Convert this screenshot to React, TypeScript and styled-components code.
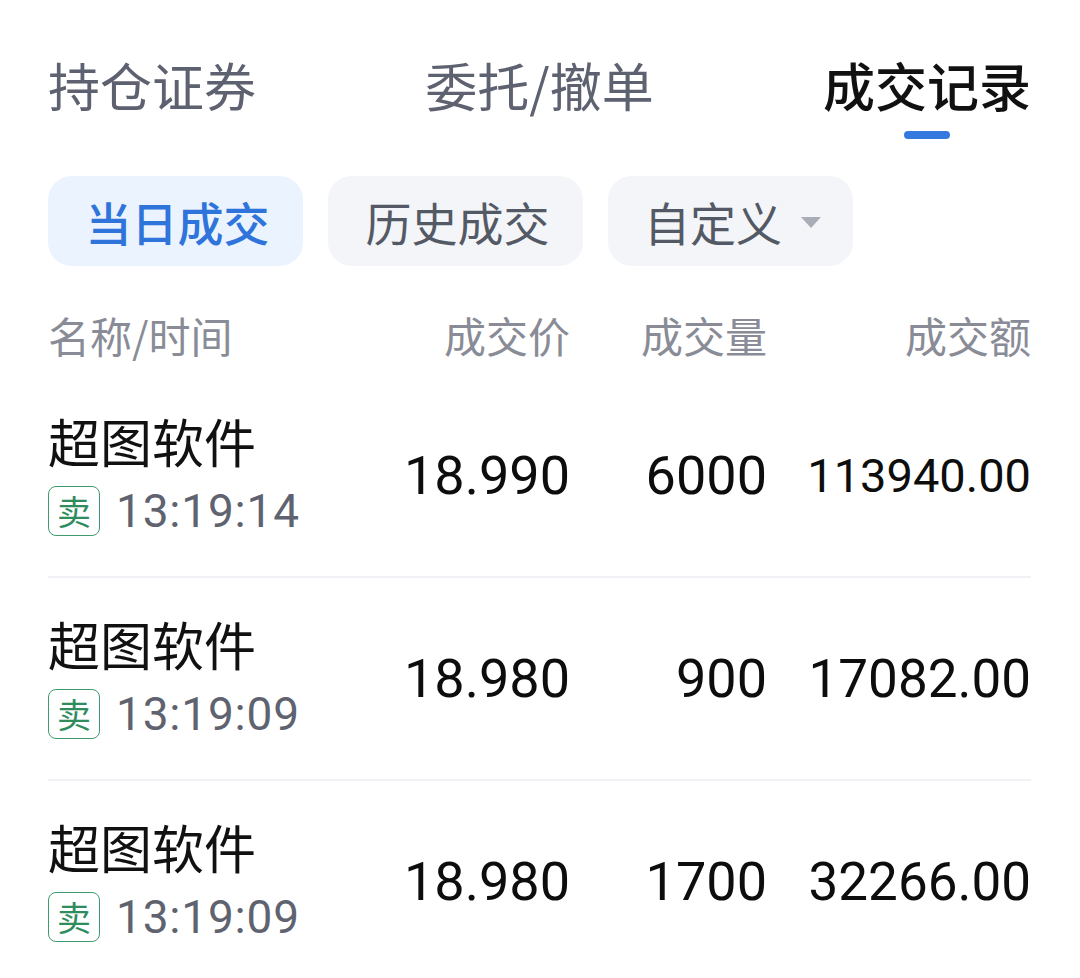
import React from "react";
import styled, { createGlobalStyle } from "styled-components";

const GlobalStyle = createGlobalStyle`
  html, body { margin: 0; padding: 0; background: #ffffff; }
  body { font-family: "Noto Sans CJK SC", "Noto Sans", sans-serif; }
`;

const Page = styled.div`
  width: 1080px;
  padding: 0 49px 0 48px;
  box-sizing: border-box;
`;

const Tabs = styled.div`
  display: flex;
  justify-content: space-between;
  padding-top: 55px;
`;

const Tab = styled.div`
  display: flex;
  flex-direction: column;
  align-items: center;
`;

const TabLabel = styled.div<{ $active?: boolean }>`
  font-size: 52px;
  line-height: 60px;
  color: ${(p) => (p.$active ? "#111111" : "#5d6170")};
  font-weight: ${(p) => (p.$active ? 500 : 400)};
  white-space: nowrap;
`;

const Underline = styled.div<{ $active?: boolean }>`
  width: 46px;
  height: 8px;
  border-radius: 4px;
  margin-top: 16px;
  background: ${(p) => (p.$active ? "#3478e0" : "transparent")};
`;

const Chips = styled.div`
  display: flex;
  gap: 25px;
  margin-top: 37px;
`;

const Chip = styled.div<{ $active?: boolean; $w: number }>`
  width: ${(p) => p.$w}px;
  height: 90px;
  border-radius: 24px;
  display: flex;
  align-items: center;
  justify-content: center;
  gap: 19px;
  background: ${(p) => (p.$active ? "#ebf3fe" : "#f3f5f8")};
  color: ${(p) => (p.$active ? "#2f74db" : "#545966")};
  font-weight: ${(p) => (p.$active ? 500 : 400)};
  font-size: 46px;
  line-height: 60px;
  padding-left: 4px;
  box-sizing: border-box;
`;

const Caret = styled.span`
  width: 0;
  height: 0;
  border-left: 10px solid transparent;
  border-right: 10px solid transparent;
  border-top: 11px solid #a9adb8;
  margin-top: 2px;
`;

const Grid = styled.div`
  display: grid;
  grid-template-columns: 1fr 200px 197px 264px;
  align-items: center;
`;

const HeaderRow = styled(Grid)`
  margin-top: 44px;
  height: 50px;
  margin-bottom: 15px;
`;

const HeadCell = styled.div<{ $right?: boolean }>`
  font-size: 42px;
  line-height: 50px;
  color: #898c96;
  text-align: ${(p) => (p.$right ? "right" : "left")};
  white-space: nowrap;
`;

const Row = styled(Grid)`
  padding: 36px 0 40px;
  border-bottom: 2px solid #f1f2f5;
  &:last-child { border-bottom-color: transparent; }
`;

const NameCol = styled.div`
  display: flex;
  flex-direction: column;
  gap: 15px;
`;

const Name = styled.div`
  font-size: 52px;
  line-height: 60px;
  color: #111111;
  white-space: nowrap;
`;

const TimeLine = styled.div`
  display: flex;
  align-items: center;
  gap: 16px;
  height: 50px;
`;

const Badge = styled.div`
  width: 52px;
  height: 50px;
  border: 1.5px solid #3f9c6e;
  border-radius: 8px;
  display: flex;
  align-items: center;
  justify-content: center;
  color: #2f8c5d;
  font-size: 34px;
  line-height: 1;
  box-sizing: border-box;
`;

const Time = styled.div`
  font-family: Roboto, "Noto Sans", sans-serif;
  font-size: 46px;
  color: #5f6370;
  letter-spacing: 0.8px;
`;

const Num = styled.div<{ $size?: number }>`
  font-family: Roboto, "Noto Sans", sans-serif;
  font-size: ${(p) => p.$size ?? 54}px;
  color: #0d0d0d;
  text-align: right;
  white-space: nowrap;
  margin-top: 4px;
`;

const trades = [
  { name: "超图软件", time: "13:19:14", price: "18.990", qty: "6000", amount: "113940.00", amountSize: 47 },
  { name: "超图软件", time: "13:19:09", price: "18.980", qty: "900", amount: "17082.00", amountSize: 53 },
  { name: "超图软件", time: "13:19:09", price: "18.980", qty: "1700", amount: "32266.00", amountSize: 53 },
];

export default function App() {
  return (
    <>
      <GlobalStyle />
      <Page>
        <Tabs>
          <Tab>
            <TabLabel>持仓证券</TabLabel>
            <Underline />
          </Tab>
          <Tab>
            <TabLabel>委托/撤单</TabLabel>
            <Underline />
          </Tab>
          <Tab>
            <TabLabel $active>成交记录</TabLabel>
            <Underline $active />
          </Tab>
        </Tabs>
        <Chips>
          <Chip $active $w={255}>当日成交</Chip>
          <Chip $w={255}>历史成交</Chip>
          <Chip $w={245}>
            自定义
            <Caret />
          </Chip>
        </Chips>
        <HeaderRow>
          <HeadCell>名称/时间</HeadCell>
          <HeadCell $right>成交价</HeadCell>
          <HeadCell $right>成交量</HeadCell>
          <HeadCell $right>成交额</HeadCell>
        </HeaderRow>
        {trades.map((t, i) => (
          <Row key={i}>
            <NameCol>
              <Name>{t.name}</Name>
              <TimeLine>
                <Badge>卖</Badge>
                <Time>{t.time}</Time>
              </TimeLine>
            </NameCol>
            <Num>{t.price}</Num>
            <Num>{t.qty}</Num>
            <Num $size={t.amountSize}>{t.amount}</Num>
          </Row>
        ))}
      </Page>
    </>
  );
}
